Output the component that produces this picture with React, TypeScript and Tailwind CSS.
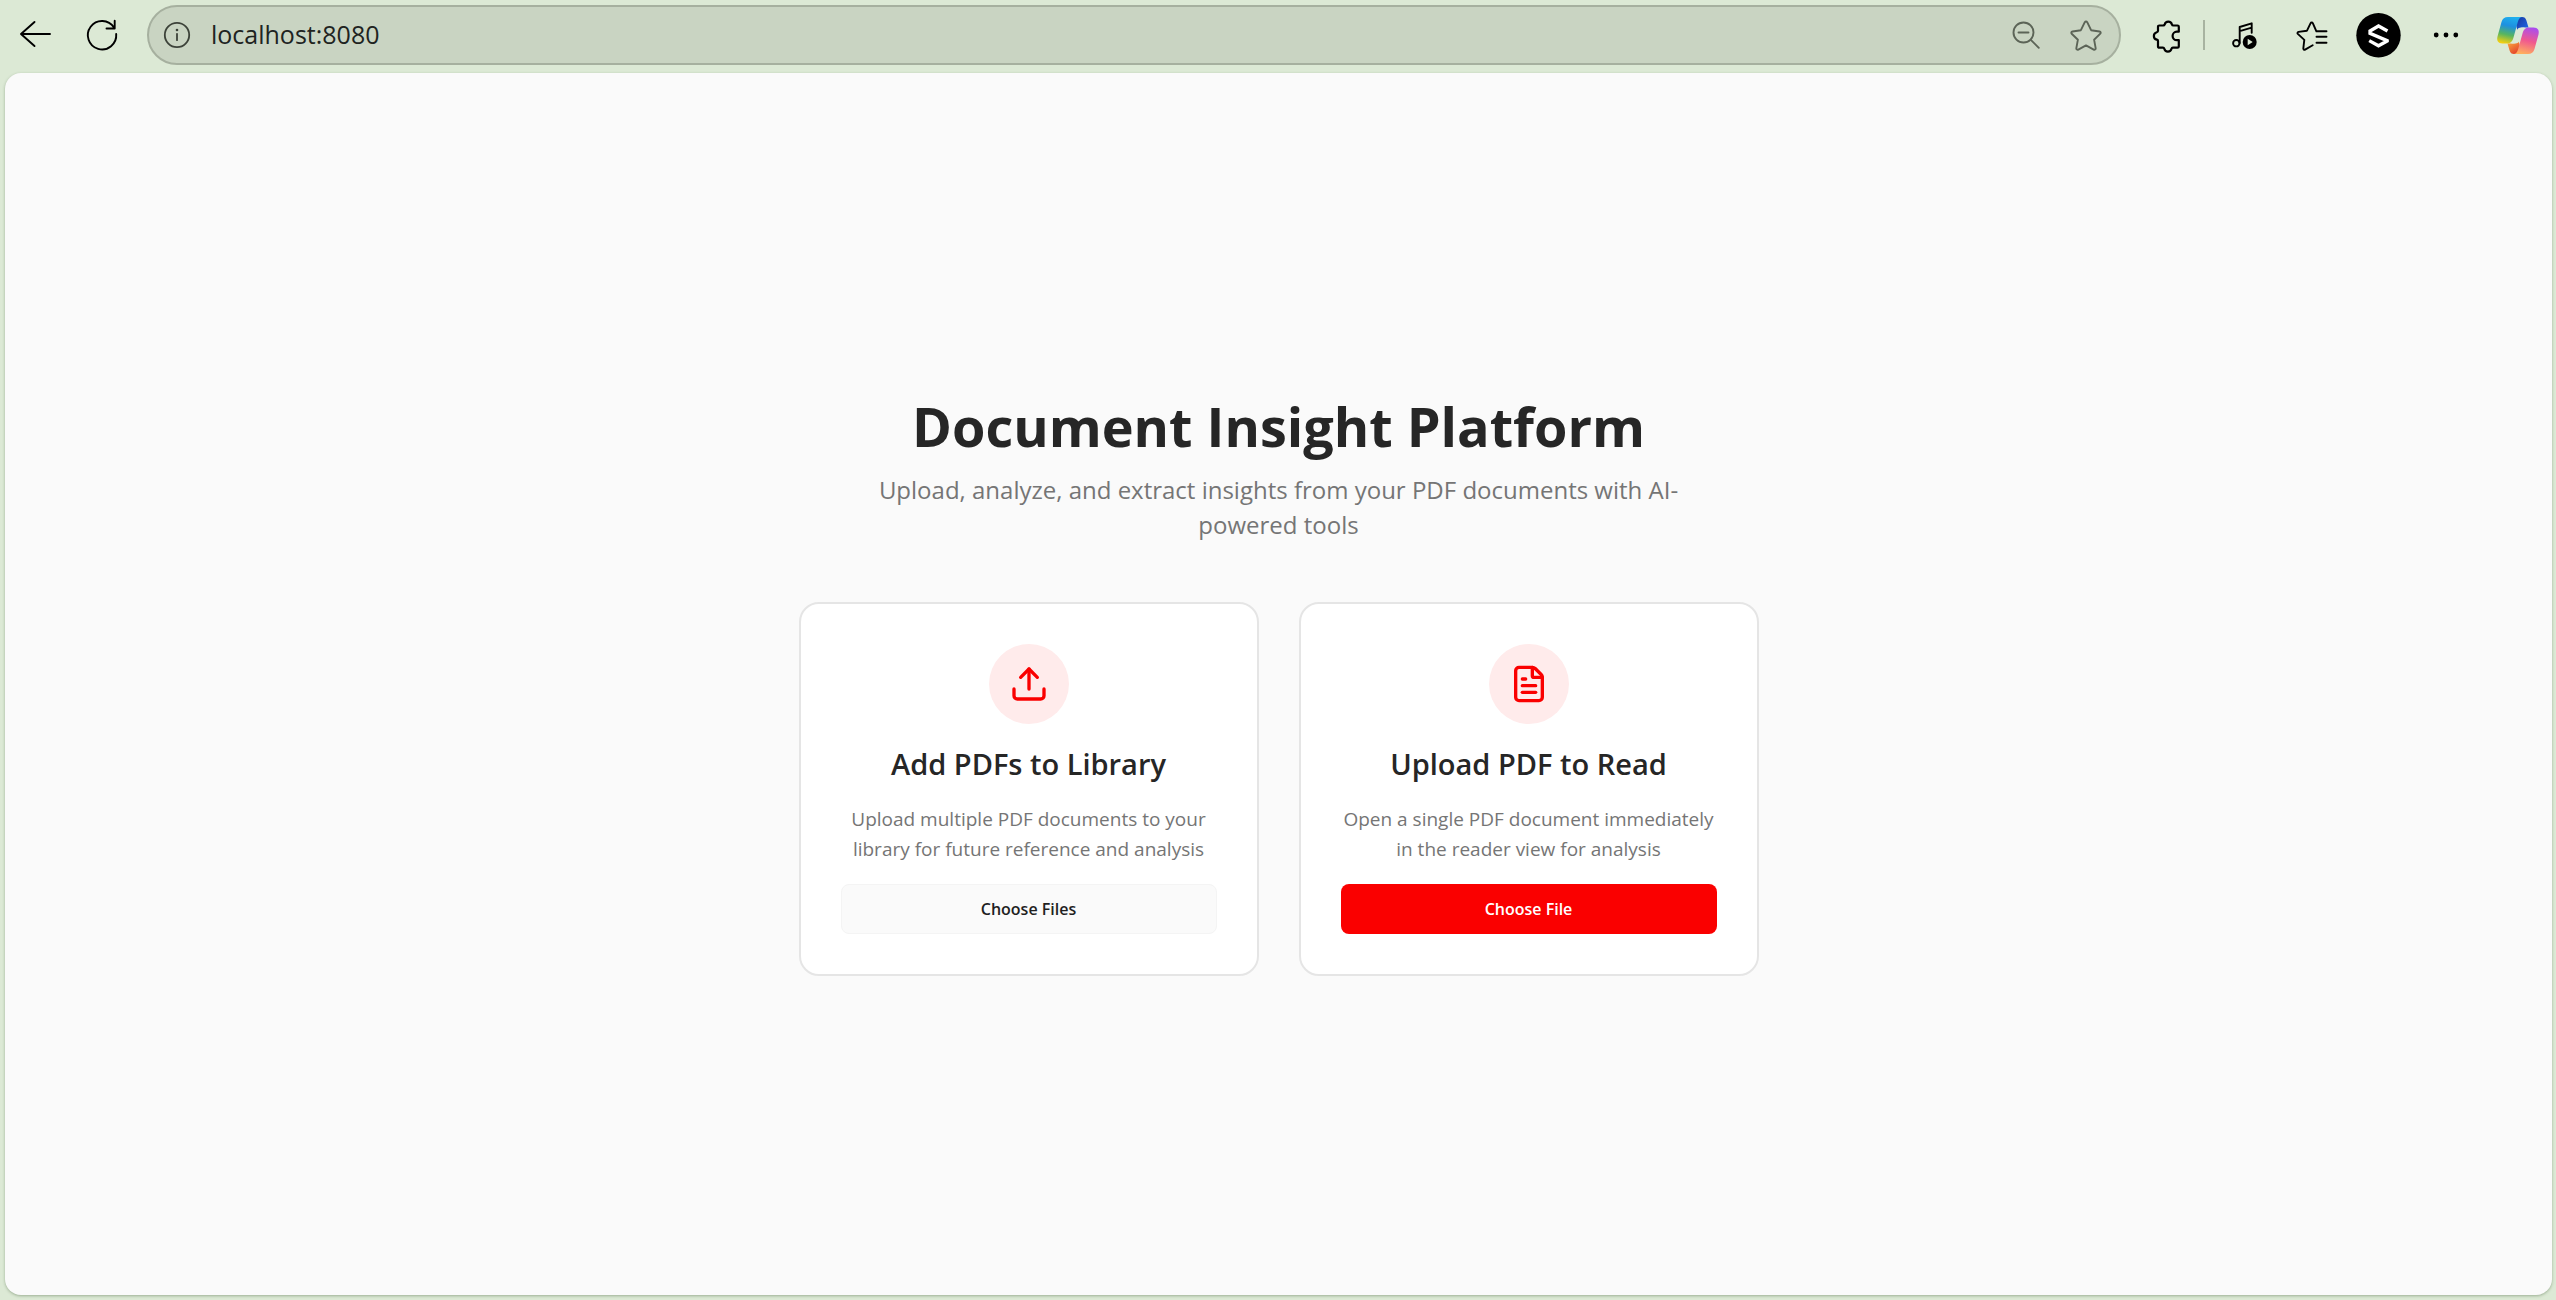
import React from "react";
import { FileText, Upload } from "lucide-react";

function ToolButton({ label, children, className = "" }: { label: string; children: React.ReactNode; className?: string }) {
  return (
    <button type="button" aria-label={label} className={`size-12 shrink-0 ${className}`}>
      <svg
        viewBox="0 0 48 48"
        className="size-12"
        fill="none"
        stroke="currentColor"
        strokeWidth="1.9"
        strokeLinecap="round"
        strokeLinejoin="round"
        aria-hidden="true"
      >
        {children}
      </svg>
    </button>
  );
}

function AddressBar() {
  return (
    <div className="flex h-[60px] min-w-0 flex-1 items-center rounded-full border-2 border-[#a6b09f] bg-[#c9d4c2] pr-[9px] pl-[14px] text-[#5c6457]">
      <button type="button" aria-label="View site information" className="mr-5 shrink-0 text-[#3c4239]">
        <svg viewBox="0 0 28 28" className="size-7" fill="none" stroke="currentColor" strokeWidth="1.8" strokeLinecap="round" aria-hidden="true">
          <circle cx="14" cy="14" r="12.2" />
          <path d="M14 12.8v6.4" />
          <circle cx="14" cy="9" r="1.3" fill="currentColor" stroke="none" />
        </svg>
      </button>
      <input
        type="text"
        aria-label="Address"
        defaultValue="localhost:8080"
        className="min-w-0 flex-1 bg-transparent text-[25px] text-[#20231f] outline-none"
      />
      <ToolButton label="Zoom out" className="mr-3">
        <circle cx="21.5" cy="21.5" r="10" />
        <path d="M16.5 21.5h10M28.8 28.8l8 8" />
      </ToolButton>
      <ToolButton label="Add to favorites">
        <path d="M22.8 11.2a1.4 1.4 0 0 1 2.4 0l3.9 8 8.4 1.3c1.2.2 1.6 1.4.8 2.2l-6.2 6 1.6 8.6c.1 1.1-1 1.8-2 1.3L24 34.4l-7.7 4.2c-1 .5-2.1-.2-2-1.3l1.6-8.6-6.2-6c-.8-.8-.4-2 .8-2.2l8.4-1.3z" />
      </ToolButton>
    </div>
  );
}

function CopilotLogo() {
  return (
    <svg viewBox="0 0 48 48" className="size-12" aria-hidden="true">
      <defs>
        <linearGradient id="cp-left" x1="20" y1="6" x2="14" y2="33" gradientUnits="userSpaceOnUse">
          <stop offset="0" stopColor="#1fb0ee" />
          <stop offset=".35" stopColor="#1e90e0" />
          <stop offset=".68" stopColor="#57b560" />
          <stop offset="1" stopColor="#f4cf10" />
        </linearGradient>
        <linearGradient id="cp-right" x1="36" y1="16" x2="29" y2="43" gradientUnits="userSpaceOnUse">
          <stop offset="0" stopColor="#a94df0" />
          <stop offset=".5" stopColor="#f0588f" />
          <stop offset="1" stopColor="#ffb05e" />
        </linearGradient>
        <linearGradient id="cp-top" x1="24" y1="8" x2="34" y2="16" gradientUnits="userSpaceOnUse">
          <stop offset="0" stopColor="#1b3fa8" />
          <stop offset="1" stopColor="#1f63e0" />
        </linearGradient>
        <linearGradient id="cp-bottom" x1="14" y1="32" x2="21" y2="43" gradientUnits="userSpaceOnUse">
          <stop offset="0" stopColor="#f9a33c" />
          <stop offset="1" stopColor="#e4442c" />
        </linearGradient>
      </defs>
      <path d="M20 6h8c2.500 0 3.600 1 4.400 3.500l2.100 7H29c-3 0-4.500 1-5.400 3.500z" fill="url(#cp-top)" />
      <path d="M28 43h-8c-2.500 0-3.600-1-4.400-3.500l-2.100-7H19c3 0 4.500-1 5.400-3.500z" fill="url(#cp-bottom)" />
      <path d="M14 6h14c-2.200.3-3.300 2-4.200 5l-4.300 15.500c-1.200 4.200-3 6-7 6H8.500C4 32.500 2.500 29.500 3.500 25.500L7.500 11c1-3.500 3-5 6.500-5z" fill="url(#cp-left)" />
      <path d="M34 43H20c2.200-.3 3.300-2 4.200-5l4.300-15.500c1.200-4.200 3-6 7-6h4c4.500 0 6 3 5 7L40.500 38c-1 3.500-3 5-6.500 5z" fill="url(#cp-right)" />
      <path d="M22.600 20c.7-2.300 2.200-3.400 4.800-3.400h3.400c-1.500 1.100-2.300 3-3 5.400l-2 7c-.8 2.400-2.200 3.500-4.800 3.500h-4c2.300-.9 3.300-3 4-5.300z" fill="#dce9d5" />
    </svg>
  );
}

function Toolbar() {
  return (
    <header className="flex items-center pt-[5px] pr-[14px] pb-2 pl-[11px] text-black">
      <nav aria-label="Navigation" className="mr-[21px] flex gap-[19px]">
        <ToolButton label="Back">
          <path d="M39 23H10M23.500 11 10 23l13.500 12" />
        </ToolButton>
        <ToolButton label="Refresh">
          <path d="M38.200 23A14.200 14.200 0 1 1 36 16.500M36.700 9.800v7.700H28.500" />
        </ToolButton>
      </nav>
      <AddressBar />
      <ToolButton label="Extensions" className="ml-[22px]">
        <path
          strokeWidth="2.200"
          d="M16.300 14.500h3.900c.8 0 1.300-.4 1.500-1.100a3.700 3.700 0 0 1 7.200 0c.2.700.7 1.100 1.500 1.100h4.100c.8 0 1.300.5 1.300 1.300v4.900h-2a4.200 4.200 0 0 0 0 8.400h2v6.300c0 .8-.5 1.300-1.300 1.300h-4.600c-.8 0-1.200.4-1.400 1.100a3.700 3.700 0 0 1-7.200 0c-.2-.7-.6-1.100-1.400-1.100h-3.600c-.8 0-1.300-.5-1.300-1.300v-5.400c0-.8-.4-1.200-1.200-1.400a3.800 3.800 0 0 1 0-7.400c.8-.2 1.200-.6 1.200-1.400v-4c0-.8.5-1.300 1.300-1.300z"
        />
      </ToolButton>
      <div className="mr-4 ml-3 h-[30px] w-[2px] bg-[#a8b3a1]" />
      <div className="mr-6 flex gap-[19px]">
        <ToolButton label="Media controls">
          <circle cx="15.300" cy="32.200" r="3.200" />
          <path d="M18.700 32V16l12-3.700v9.500M18.700 20.200l12-3.500" />
          <circle cx="28.700" cy="31" r="7" fill="currentColor" stroke="none" />
          <path d="M26.700 27.800v6.400l5-3.200z" fill="#dce9d5" stroke="none" />
        </ToolButton>
        <ToolButton label="Favorites">
          <path d="M38.500 20.300H28.400l-3.500-8c-.5-1-1.900-1-2.400 0L19 19.700l-8.500 1.200c-1 .2-1.400 1.300-.7 2l6.500 6-1 8.600c0 1 .9 1.600 1.800 1.100l7.600-4.400M28.500 25.800h10M28.500 31.700h10" />
        </ToolButton>
        <button type="button" aria-label="Profile" className="size-12">
          <svg viewBox="0 0 48 48" className="size-12" fill="none" aria-hidden="true">
            <circle cx="23.500" cy="24.300" r="22.200" fill="#000" />
            <path d="M32.500 20 23.500 15 15 20v2.300l17.200 7.400V30L23.500 34.800l-9.300-5.200" stroke="#fff" strokeWidth="3.300" />
          </svg>
        </button>
        <ToolButton label="Settings and more">
          <g fill="currentColor" stroke="none">
            <circle cx="14.200" cy="24" r="2.400" />
            <circle cx="24" cy="24" r="2.400" />
            <circle cx="33.800" cy="24" r="2.400" />
          </g>
        </ToolButton>
      </div>
      <button type="button" aria-label="Copilot" className="size-12 shrink-0">
        <CopilotLogo />
      </button>
    </header>
  );
}

type CardProps = {
  icon: React.ReactNode;
  title: string;
  text: string;
  action: string;
  actionClass: string;
};

function UploadCard({ icon, title, text, action, actionClass }: CardProps) {
  return (
    <section className="flex flex-col items-center gap-5 rounded-[20px] border-2 border-[#e5e5e5] bg-white p-10 text-center">
      <div className="flex size-20 items-center justify-center rounded-full bg-[#ffebeb] text-[#fa0000]">{icon}</div>
      <h2 className="text-[29px]/10 font-semibold text-[#262626]">{title}</h2>
      <p className="text-[19px]/[30px] text-[#757575]">{text}</p>
      <button type="button" className={`h-[50px] w-full rounded-lg text-base font-semibold ${actionClass}`}>
        {action}
      </button>
    </section>
  );
}

export default function App() {
  return (
    <div className="flex min-h-screen flex-col bg-[#dce9d5] font-['Open_Sans','Noto_Sans',sans-serif]">
      <Toolbar />
      <main className="mr-1 mb-[5px] ml-[5px] flex flex-1 flex-col items-center justify-center rounded-[16px] bg-[#fafafa] shadow-[0_1px_3px_rgba(60,90,50,0.4)]">
        <div className="w-full max-w-[960px]">
          <div className="mx-auto mb-[60px] max-w-[840px] text-center">
            <h1 className="mb-3 text-[54px]/[68px] font-bold text-[#262626]">Document Insight Platform</h1>
            <p className="text-2xl/[35px] text-[#757575]">
              Upload, analyze, and extract insights from your PDF documents with AI-
              <br />
              powered tools
            </p>
          </div>
          <div className="grid grid-cols-2 gap-10">
            <UploadCard
              icon={<Upload className="size-10" aria-hidden="true" />}
              title="Add PDFs to Library"
              text="Upload multiple PDF documents to your library for future reference and analysis"
              action="Choose Files"
              actionClass="border border-[#f4f4f4] bg-[#fafafa] text-[#1f1f1f]"
            />
            <UploadCard
              icon={<FileText className="size-10" aria-hidden="true" />}
              title="Upload PDF to Read"
              text="Open a single PDF document immediately in the reader view for analysis"
              action="Choose File"
              actionClass="bg-[#fa0000] text-white"
            />
          </div>
        </div>
      </main>
    </div>
  );
}
